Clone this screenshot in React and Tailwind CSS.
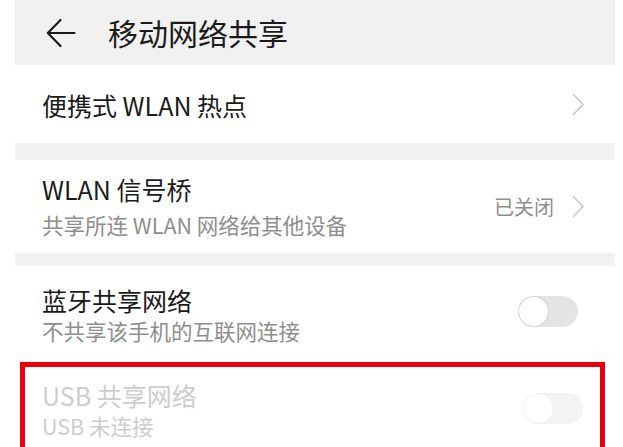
import React from "react";

const font = { fontFamily: '"Noto Sans CJK SC", "Noto Sans", sans-serif' };

function Chevron() {
  return (
    <svg width="13" height="23" viewBox="0 0 13 23" fill="none">
      <path d="M1.5 1.5 L11 11.5 L1.5 21.5" stroke="#c9c9c9" strokeWidth="1.6" strokeLinecap="round" strokeLinejoin="round" />
    </svg>
  );
}

function Toggle({ faded }) {
  return (
    <div className={`w-[60px] h-[31px] rounded-full flex items-center px-[1px] ${faded ? "bg-[#f3f3f3]" : "bg-[#e4e4e4]"}`}>
      <div className={`w-[29px] h-[29px] rounded-full bg-white ${faded ? "shadow-[0_0_1px_rgba(0,0,0,0.06)]" : "shadow-[0_0_2px_rgba(0,0,0,0.22)]"}`} />
    </div>
  );
}

export default function App() {
  return (
    <div className="w-[623px] h-[447px] bg-white overflow-hidden" style={font}>
      <div className="mx-[15px] w-[600px]">
        {/* Header */}
        <div className="h-[65px] bg-[#f1f1f1] flex items-center">
          <div className="pl-[31px] w-[93px] flex items-center">
            <svg width="30" height="30" viewBox="0 0 30 30" fill="none">
              <path d="M28.5 15 H2.5 M14.5 2 L1.8 15 L14.5 28" stroke="#1b1b1b" strokeWidth="2.2" strokeLinecap="round" strokeLinejoin="round" />
            </svg>
          </div>
          <div className="text-[30px] leading-none text-[#1b1b1b] pb-[2px]">移动网络共享</div>
        </div>

        {/* Row 1 */}
        <div className="h-[78px] flex items-center justify-between pl-[27px] pr-[30px]">
          <div className="text-[25px] text-[#1b1b1b] leading-none pt-[2px]">便携式 WLAN 热点</div>
          <Chevron />
        </div>

        <div className="h-[17px] bg-[#f2f2f2]" />

        {/* Row 2 */}
        <div className="h-[93px] flex items-center justify-between pl-[27px] pr-[30px]">
          <div className="flex flex-col">
            <div className="text-[25px] leading-[36px] text-[#1b1b1b]">WLAN 信号桥</div>
            <div className="text-[21.5px] leading-[36px] text-[#8e8e8e]">共享所连 WLAN 网络给其他设备</div>
          </div>
          <div className="flex items-center gap-[18px]">
            <span className="text-[20px] text-[#8e8e8e] leading-none">已关闭</span>
            <Chevron />
          </div>
        </div>

        <div className="h-[13px] bg-[#f2f2f2]" />

        {/* Row 3 */}
        <div className="h-[91px] flex items-center justify-between pl-[27px] pr-[37px]">
          <div className="flex flex-col pt-[6px]">
            <div className="text-[25px] leading-[32px] text-[#1b1b1b]">蓝牙共享网络</div>
            <div className="text-[21.5px] leading-[30px] text-[#8e8e8e]">不共享该手机的互联网连接</div>
          </div>
          <Toggle />
        </div>

        {/* Row 4 with red annotation */}
        <div className="mt-[5px] ml-[5px] w-[585px] h-[100px] border-[5px] border-b-0 border-[#e8000b] flex items-start justify-between pl-[17px] pr-[17px] pt-[11px]">
          <div className="flex flex-col">
            <div className="text-[25px] leading-[34px] text-[#cdcdcd]">USB 共享网络</div>
            <div className="text-[21.5px] leading-[28px] text-[#cdcdcd]">USB 未连接</div>
          </div>
          <div className="pt-[15px]">
            <Toggle faded />
          </div>
        </div>
      </div>
    </div>
  );
}
